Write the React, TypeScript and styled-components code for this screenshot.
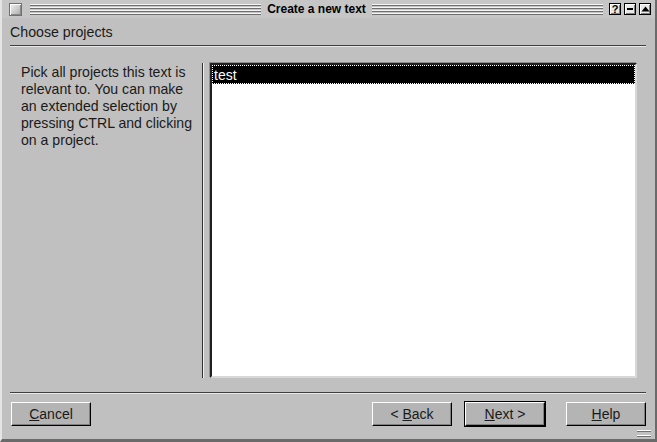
import React from "react";
import styled, { createGlobalStyle } from "styled-components";

const Global = createGlobalStyle`
  html, body { margin: 0; padding: 0; background: #c0c0c0; }
  body { font-family: "Liberation Sans", Arial, sans-serif; }
`;

const Window = styled.div`
  width: 657px;
  height: 442px;
  box-sizing: border-box;
  background: #c0c0c0;
  border-left: 2px solid #e4e4e4;
  border-right: 2px solid #6a6a6a;
  border-bottom: 3px solid #6a6a6a;
  display: flex;
  flex-direction: column;
  position: relative;
`;

const TitleBar = styled.div`
  height: 18px;
  display: flex;
  align-items: center;
  padding: 0 4px 0 5px;
  gap: 6px;
  background: #c6c6c6;
`;

const BoxButton = styled.div`
  width: 12px;
  height: 12px;
  box-sizing: border-box;
  border: 1px solid #000;
  background: #e8e8e8;
  display: flex;
  align-items: center;
  justify-content: center;
  font: bold 11px "Liberation Sans", Arial, sans-serif;
  line-height: 1;
  box-shadow: inset 1px 1px 0 #fff, inset -1px -1px 0 #808080;
`;

const CloseBox = styled.div`
  width: 13px;
  height: 13px;
  box-sizing: border-box;
  border: 1px solid #707070;
  background: linear-gradient(135deg, #f4f4f4, #a8a8a8);
  box-shadow: inset 1px 1px 0 #fff, inset -1px -1px 0 #888;
  margin: 1px 2px 0 2px;
`;

const Stripes = styled.div`
  flex: 1;
  height: 11px;
  background: repeating-linear-gradient(
    to bottom,
    #f4f4f4 0px,
    #f4f4f4 1px,
    #6e6e6e 1px,
    #6e6e6e 2px,
    transparent 2px,
    transparent 3px
  );
`;

const Title = styled.div`
  font: bold 12px "Liberation Sans", Arial, sans-serif;
  color: #000;
  white-space: nowrap;
`;

const Buttons = styled.div`
  display: flex;
  gap: 3px;
`;

const Header = styled.div`
  height: 27px;
  display: flex;
  align-items: center;
  padding: 1px 0 0 8px;
  box-sizing: border-box;
  font-size: 14.2px;
  color: #1a1a1a;
`;

const Rule = styled.div`
  margin: 0 9px 0 8px;
  height: 1px;
  background: #404040;
  border-bottom: 1px solid #e8e8e8;
`;

const Body = styled.div`
  flex: 1;
  display: flex;
  padding: 16px 18px 14px 19px;
  min-height: 0;
`;

const Help = styled.div`
  width: 181px;
  font-size: 14.1px;
  line-height: 17px;
  color: #1a1a1a;
  padding-top: 1px;
`;

const VLine = styled.div`
  width: 1px;
  background: #303030;
  border-right: 1px solid #f0f0f0;
  margin-right: 6px;
`;

const List = styled.div`
  flex: 1;
  background: #fff;
  box-sizing: border-box;
  border-top: 2px solid #202020;
  border-left: 2px solid #202020;
  border-right: 2px solid #d8d8d8;
  border-bottom: 2px solid #d8d8d8;
  box-shadow: -1px -1px 0 #909090;
`;

const Item = styled.div<{ $selected?: boolean }>`
  height: 19px;
  box-sizing: border-box;
  background: ${(p) => (p.$selected ? "#000" : "transparent")};
  color: ${(p) => (p.$selected ? "#fff" : "#000")};
  outline: ${(p) => (p.$selected ? "1px dotted #fff" : "none")};
  outline-offset: -1px;
  font-size: 14px;
  line-height: 20px;
  padding-left: 2px;
`;

const Footer = styled.div`
  height: 45px;
  display: flex;
  align-items: flex-start;
  padding: 8px 9px 0 9px;
  box-sizing: border-box;
`;

const Spacer = styled.div`
  flex: 1;
`;

const Btn = styled.button<{ $default?: boolean }>`
  width: 80px;
  height: 24px;
  box-sizing: border-box;
  background: #b4b4b4;
  font: 14px "Liberation Sans", Arial, sans-serif;
  color: #1a1a1a;
  padding: 0;
  border: 1px solid;
  border-color: #fff #000 #000 #fff;
  box-shadow: inset -1px -1px 0 #808080;
  outline: ${(p) => (p.$default ? "1px solid #000" : "none")};
  outline-offset: 0;
  margin-left: ${(p) => (p.$default ? "13px" : "0")};
  margin-right: ${(p) => (p.$default ? "21px" : "0")};
  u { text-decoration: underline; }
`;

const Grip = styled.div`
  position: absolute;
  right: 4px;
  bottom: 3px;
  width: 14px;
  height: 4px;
  border-top: 1px solid #fff;
  border-bottom: 1px solid #fff;
  box-shadow: 0 1px 0 #707070, inset 0 1px 0 #707070;
`;

export default function App() {
  return (
    <>
      <Global />
      <Window>
        <TitleBar>
          <CloseBox />
          <Stripes />
          <Title>Create a new text</Title>
          <Stripes />
          <Buttons>
            <BoxButton>?</BoxButton>
            <BoxButton>
              <svg width="8" height="8" viewBox="0 0 8 8">
                <rect x="1" y="3" width="6" height="2" fill="#000" />
              </svg>
            </BoxButton>
            <BoxButton>
              <svg width="9" height="8" viewBox="0 0 9 8">
                <polygon points="0.5,6.5 4.5,1.5 8.5,6.5" fill="#000" />
              </svg>
            </BoxButton>
          </Buttons>
        </TitleBar>
        <Header>Choose projects</Header>
        <Rule />
        <Body>
          <Help>
            Pick all projects this text is relevant to. You can make an extended
            selection by pressing CTRL and clicking on a project.
          </Help>
          <VLine />
          <List>
            <Item $selected>test</Item>
          </List>
        </Body>
        <Rule />
        <Footer>
          <Btn>
            <u>C</u>ancel
          </Btn>
          <Spacer />
          <Btn>
            &lt; <u>B</u>ack
          </Btn>
          <Btn $default>
            <u>N</u>ext &gt;
          </Btn>
          <Btn>
            <u>H</u>elp
          </Btn>
        </Footer>
        <Grip />
      </Window>
    </>
  );
}
